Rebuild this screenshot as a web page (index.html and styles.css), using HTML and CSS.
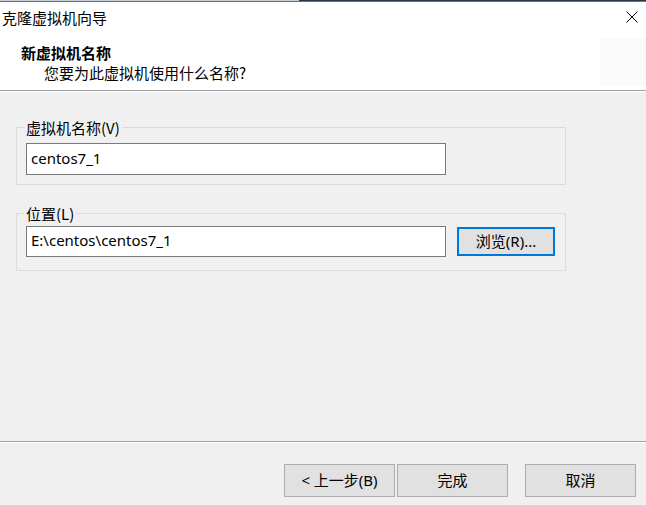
FILE: index.html
```html
<!DOCTYPE html>
<html lang="zh-CN">
<head>
<meta charset="utf-8">
<title>克隆虚拟机向导</title>
<link rel="stylesheet" href="styles.css">
</head>
<body>
<div class="window">
  <div class="edge-top"></div>
  <div class="edge-blue"></div>
  <div class="titlebar">
    <span class="title">克隆虚拟机向导</span>
    <svg class="close" width="12" height="12" viewBox="0 0 12 12"><path d="M0.5 0.5 L11.5 11.5 M11.5 0.5 L0.5 11.5" stroke="#000" stroke-width="1" fill="none"/></svg>
  </div>
  <div class="header">
    <div class="header-text">
      <div class="header-title">新虚拟机名称</div>
      <div class="header-sub">您要为此虚拟机使用什么名称?</div>
    </div>
    <div class="header-image"></div>
  </div>
  <div class="etch"></div>
  <div class="content">
    <div class="group">
      <div class="group-label">虚拟机名称(V)</div>
      <div class="row row-first">
        <div class="textbox">centos7_1</div>
      </div>
    </div>
    <div class="group group-second">
      <div class="group-label">位置(L)</div>
      <div class="row row-second">
        <div class="textbox textbox-short">E:\centos\centos7_1</div>
        <div class="browse">浏览(R)...</div>
      </div>
    </div>
  </div>
  <div class="footer">
    <div class="btn btn-back">&lt; 上一步(B)</div>
    <div class="btn btn-finish">完成</div>
    <div class="btn btn-cancel">取消</div>
  </div>
</div>
</body>
</html>
```

FILE: styles.css
```css
html, body {
  margin: 0;
  padding: 0;
}
body {
  width: 646px;
  height: 505px;
  overflow: hidden;
  background: #f0f0f0;
  font-family: "Noto Sans", "Noto Sans CJK SC", sans-serif;
  font-size: 15px;
  color: #000;
}
.window {
  display: flex;
  flex-direction: column;
  height: 505px;
}
.edge-top {
  height: 1px;
  background: linear-gradient(to right, #c3cbd3 0, #c3cbd3 299px, #2c3947 299px, #2c3947 100%);
}
.edge-blue {
  height: 1px;
  background: #2f7fc8;
}
.titlebar {
  height: 32px;
  background: #fff;
  display: flex;
  align-items: center;
  justify-content: space-between;
  padding-left: 2px;
}
.title {
  line-height: 32px;
  font-family: "Noto Sans CJK SC", sans-serif;
}
.close {
  margin-right: 8px;
  margin-top: -2px;
}
.header {
  height: 56px;
  background: #fff;
  border-bottom: 1px solid #a0a0a0;
  display: flex;
  justify-content: space-between;
}
.header-text {
  padding-top: 9px;
  padding-left: 21px;
}
.header-title {
  font-weight: bold;
  line-height: 20px;
  font-family: "Noto Sans CJK SC", sans-serif;
}
.header-sub {
  line-height: 20px;
  padding-left: 23px;
  font-family: "Noto Sans CJK SC", sans-serif;
}
.header-image {
  width: 46px;
  height: 48px;
  margin-top: 4px;
  background: #fafafa;
}
.etch {
  height: 1px;
  background: #fff;
}
.content {
  flex: 1;
  padding: 35px 0 0 16px;
}
.group {
  width: 550px;
  box-sizing: border-box;
  border: 1px solid #dcdcdc;
  padding: 0 0 9px 9px;
}
.group-second {
  margin-top: 28px;
  padding-bottom: 13px;
}
.group-label {
  width: fit-content;
  margin: -9px 0 0 -2px;
  padding: 0 2px;
  height: 18px;
  line-height: 18px;
  background: #f0f0f0;
  font-family: "Noto Sans CJK SC", sans-serif;
}
.row {
  display: flex;
  align-items: center;
}
.row-first {
  margin-top: 6px;
}
.row-second {
  margin-top: 3px;
}
.textbox {
  width: 420px;
  height: 32px;
  box-sizing: border-box;
  border: 1px solid #7a7a7a;
  background: #fff;
  padding-left: 4px;
  line-height: 28px;
}
.textbox-short {
  height: 31px;
  line-height: 27px;
}
.browse {
  margin-left: 11px;
  width: 98px;
  height: 29px;
  box-sizing: border-box;
  border: 2px solid #0078d7;
  background: #e1e1e1;
  text-align: center;
  line-height: 24px;
}
.footer {
  height: 64px;
  box-sizing: border-box;
  border-top: 1px solid #a0a0a0;
  box-shadow: inset 0 1px 0 #fff;
  padding: 22px 10px 8px 0;
  display: flex;
  justify-content: flex-end;
  align-items: flex-start;
}
.btn {
  width: 111px;
  height: 33px;
  box-sizing: border-box;
  border: 1px solid #adadad;
  background: #e1e1e1;
  text-align: center;
  line-height: 30px;
}
.btn-finish {
  margin-left: 2px;
}
.btn-cancel {
  margin-left: 17px;
}
```
